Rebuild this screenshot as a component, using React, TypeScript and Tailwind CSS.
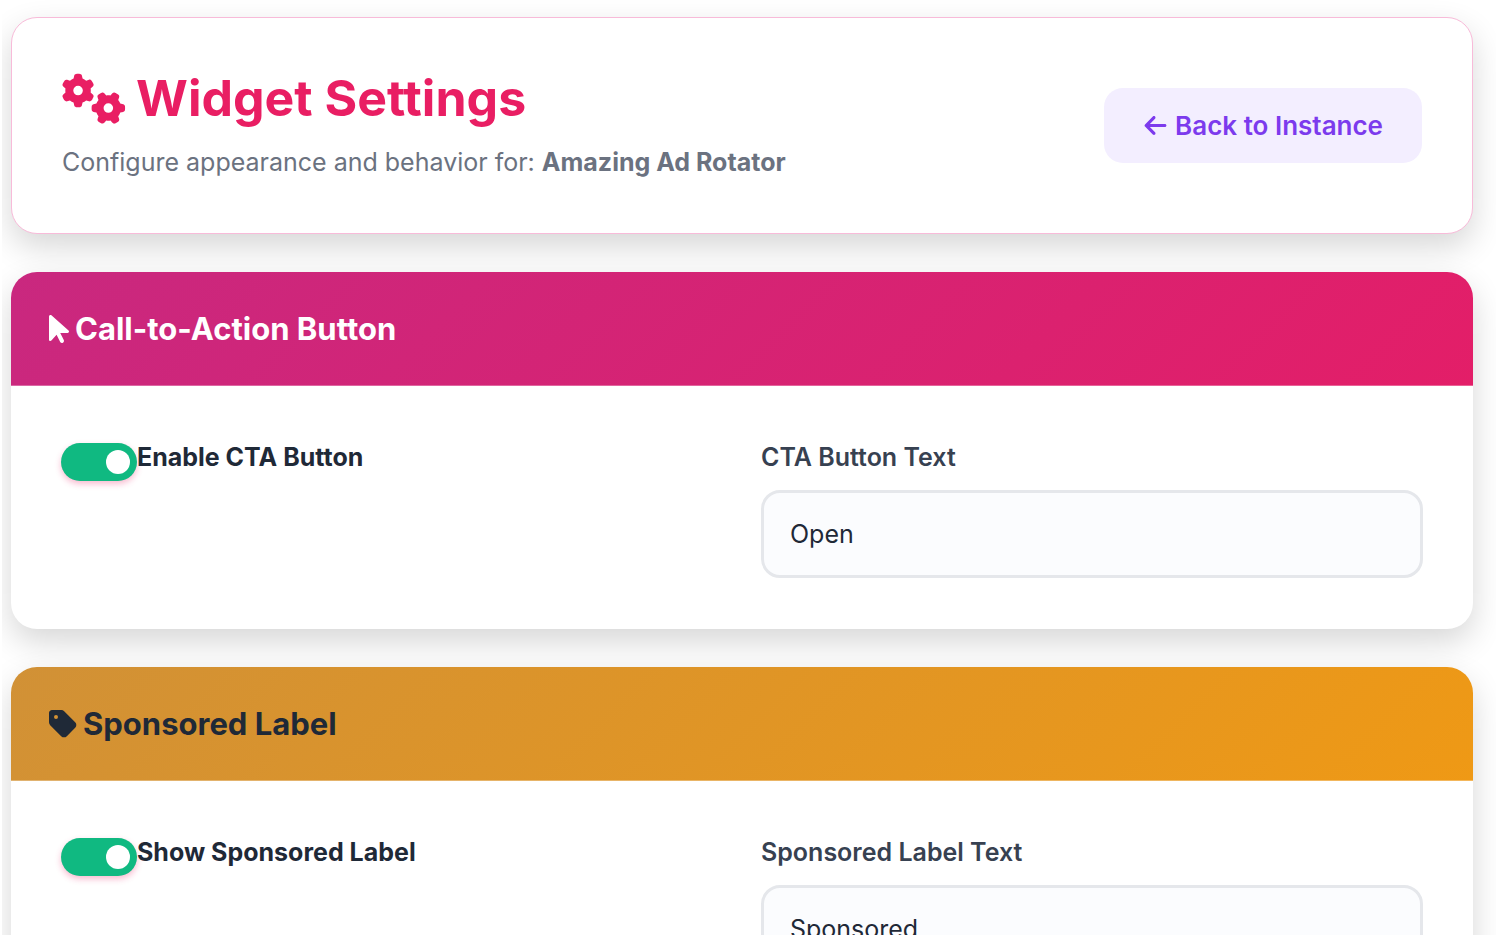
import { useId, useState } from 'react';
import type { ReactNode } from 'react';
import clsx from 'clsx';
import { FaArrowLeft, FaArrowPointer, FaGears, FaTag } from 'react-icons/fa6';

const cardShadow = 'shadow-[0_13px_32px_rgba(0,0,0,0.16)]';

function Toggle({ label }: { label: string }) {
  const id = useId();
  const [checked, setChecked] = useState(true);

  return (
    <div className="flex items-start">
      <input
        id={id}
        type="checkbox"
        role="switch"
        checked={checked}
        onChange={(e) => setChecked(e.target.checked)}
        className={clsx(
          'mt-1.5 flex h-[38px] w-[76px] shrink-0 cursor-pointer appearance-none items-center rounded-full px-[7px]',
          'bg-gray-300 shadow-[0_3px_6px_rgba(233,30,99,0.3)] checked:justify-end checked:bg-[#10b981]',
          "before:block before:size-6 before:rounded-full before:bg-white before:content-['']"
        )}
      />
      <label htmlFor={id} className="font-bold text-[#1f2937]">
        {label}
      </label>
    </div>
  );
}

function TextField({ label, initial }: { label: string; initial: string }) {
  const id = useId();

  return (
    <div className="flex flex-col gap-3">
      <label htmlFor={id} className="font-semibold text-[#374151]">
        {label}
      </label>
      <input
        id={id}
        type="text"
        defaultValue={initial}
        className="h-[88px] w-full rounded-[19px] border-3 border-[#e5e7eb] bg-[#fbfcfe] px-[26px] text-[#1f2937] outline-none focus:border-[#e91e63]"
      />
    </div>
  );
}

type SectionProps = {
  title: string;
  icon: ReactNode;
  headerClass: string;
  children: ReactNode;
};

function Section({ title, icon, headerClass, children }: SectionProps) {
  return (
    <section className={clsx('rounded-[26px] bg-white', cardShadow)}>
      <header
        className={clsx('rounded-t-[26px] border-b border-white/30 bg-origin-border px-[38px] py-[37px]', headerClass)}
      >
        <h2 className="flex items-center gap-1.5 text-[31px] leading-[39px] font-bold">
          {icon}
          {title}
        </h2>
      </header>
      <div className="grid grid-cols-2 gap-[38px] px-[50px] py-[51px]">{children}</div>
    </section>
  );
}

export default function App() {
  return (
    <div className="flex h-screen flex-col bg-white pb-0.5 pl-0.5 font-['Inter',sans-serif] text-[25px] leading-[41px]">
      <main className="flex-1 overflow-y-auto pt-[17px] pr-[23px] pb-10 pl-[9px] [scrollbar-width:none]">
        <div className="flex flex-col gap-[38px]">
          <div
            className={clsx(
              'flex items-center justify-between rounded-[26px] border border-[#f8bbd9] bg-white p-[50px]',
              cardShadow
            )}
          >
            <div className="flex flex-col gap-[13px]">
              <h1 className="flex items-center gap-[10px] text-[50px] leading-[61px] font-bold text-[#e91e63]">
                <FaGears className="h-[51px] w-[64px]" />
                Widget Settings
              </h1>
              <p className="text-[#6b7280]">
                Configure appearance and behavior for: <strong className="font-bold">Amazing Ad Rotator</strong>
              </p>
            </div>
            <a
              href="#instance"
              className="flex items-center gap-[7px] rounded-[19px] bg-[#f3eeff] px-[39px] py-[17px] text-[26px] font-semibold text-[#7c3aed]"
            >
              <FaArrowLeft className="size-[25px]" />
              Back to Instance
            </a>
          </div>

          <Section
            title="Call-to-Action Button"
            icon={<FaArrowPointer className="h-8 w-5" />}
            headerClass="bg-[linear-gradient(135deg,#c9287f,#e31e68)] text-white"
          >
            <Toggle label="Enable CTA Button" />
            <TextField label="CTA Button Text" initial="Open" />
          </Section>

          <Section
            title="Sponsored Label"
            icon={<FaTag className="h-8 w-7" />}
            headerClass="bg-[linear-gradient(135deg,#d19136,#ef9915)] text-[#1f2937]"
          >
            <Toggle label="Show Sponsored Label" />
            <TextField label="Sponsored Label Text" initial="Sponsored" />
          </Section>
        </div>
      </main>
    </div>
  );
}
